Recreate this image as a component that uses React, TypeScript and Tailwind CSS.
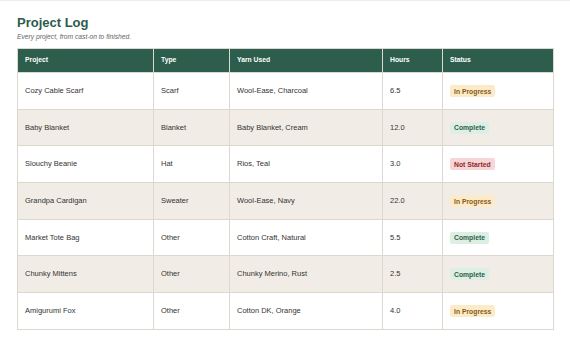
import React from 'react'

type Status = 'In Progress' | 'Complete' | 'Not Started'

interface Row {
  project: string
  type: string
  yarn: string
  hours: string
  status: Status
}

const rows: Row[] = [
  { project: 'Cozy Cable Scarf', type: 'Scarf', yarn: 'Wool-Ease, Charcoal', hours: '6.5', status: 'In Progress' },
  { project: 'Baby Blanket', type: 'Blanket', yarn: 'Baby Blanket, Cream', hours: '12.0', status: 'Complete' },
  { project: 'Slouchy Beanie', type: 'Hat', yarn: 'Rios, Teal', hours: '3.0', status: 'Not Started' },
  { project: 'Grandpa Cardigan', type: 'Sweater', yarn: 'Wool-Ease, Navy', hours: '22.0', status: 'In Progress' },
  { project: 'Market Tote Bag', type: 'Other', yarn: 'Cotton Craft, Natural', hours: '5.5', status: 'Complete' },
  { project: 'Chunky Mittens', type: 'Other', yarn: 'Chunky Merino, Rust', hours: '2.5', status: 'Complete' },
  { project: 'Amigurumi Fox', type: 'Other', yarn: 'Cotton DK, Orange', hours: '4.0', status: 'In Progress' },
]

const badge: Record<Status, string> = {
  'In Progress': 'bg-[#fcebc9] text-[#8a5a17]',
  Complete: 'bg-[#dcefe2] text-[#2e5e4c]',
  'Not Started': 'bg-[#f6d6d6] text-[#8c2b2b]',
}

export default function App() {
  return (
    <div className="min-h-[349px] border-t border-[#ececec] bg-white px-[17px] pt-[14px] font-['Liberation_Sans',Arial,sans-serif]">
      <h1 className="text-[13px] font-bold leading-[16px] text-[#2e5a4b]">Project Log</h1>
      <p className="mt-[1px] text-[6.7px] italic leading-[9px] text-[#666]">Every project, from cast-on to finished.</p>
      <table className="mt-[7px] w-[536px] table-fixed border-collapse text-[7.5px] text-[#333]">
        <colgroup>
          <col className="w-[136px]" />
          <col className="w-[76px]" />
          <col className="w-[153px]" />
          <col className="w-[60px]" />
          <col className="w-[111px]" />
        </colgroup>
        <thead>
          <tr className="h-[24px] bg-[#2d5e4d] text-left text-[6.8px] font-bold text-white">
            {['Project', 'Type', 'Yarn Used', 'Hours', 'Status'].map((h) => (
              <th key={h} className="border border-[#ddd8cf] px-[7px] font-bold">
                {h}
              </th>
            ))}
          </tr>
        </thead>
        <tbody>
          {rows.map((r, i) => (
            <tr key={r.project} className={`${i % 3 === 1 ? 'h-[36px]' : 'h-[37px]'} ${i % 2 === 1 ? 'bg-[#f1ede6]' : 'bg-white'}`}>
              <td className="border border-[#ddd8cf] px-[7px]">{r.project}</td>
              <td className="border border-[#ddd8cf] px-[7px]">{r.type}</td>
              <td className="border border-[#ddd8cf] px-[7px]">{r.yarn}</td>
              <td className="border border-[#ddd8cf] px-[7px]">{r.hours}</td>
              <td className="border border-[#ddd8cf] px-[7px]">
                <span className={`inline-block rounded-[2px] px-[4px] py-[2.5px] text-[6.8px] font-bold leading-[7px] ${badge[r.status]}`}>
                  {r.status}
                </span>
              </td>
            </tr>
          ))}
        </tbody>
      </table>
    </div>
  )
}
